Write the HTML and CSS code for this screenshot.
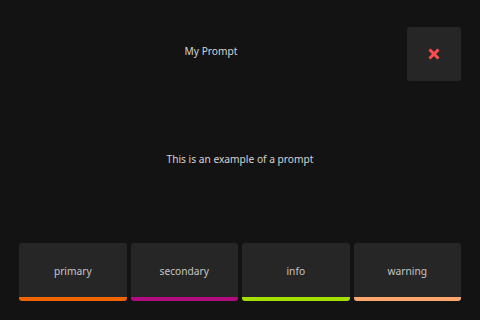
FILE: index.html
```html
<!doctype html>
<html>
 <head>
  <title>My Prompt</title>
  <meta name="viewport" content="width=device-width, initial-scale=1">
  <link rel="stylesheet" href="styles.css">
 </head>
 <body>
  <main class="prompt">
   <header class="prompt-head">
    <h1 class="prompt-title">My Prompt</h1>
    <button class="close" aria-label="Close">
     <svg width="12" height="12" viewBox="0 0 12 12">
      <path d="M1.5 1.5 L10.5 10.5 M10.5 1.5 L1.5 10.5" stroke="#ff4d4d" stroke-width="3" stroke-linecap="butt"/>
     </svg>
    </button>
   </header>
   <p class="prompt-text">This is an example of a prompt</p>
   <div class="actions">
    <button class="action primary">primary</button>
    <button class="action secondary">secondary</button>
    <button class="action info">info</button>
    <button class="action warning">warning</button>
   </div>
  </main>
 </body>
</html>
```

FILE: styles.css
```css
html, body {
 margin: 0;
 height: 100%;
}
body {
 background-color: #131313;
 color: #d4d4d4;
 font-family: "Noto Sans", sans-serif;
 font-size: 10.2px;
}
.prompt {
 height: 100%;
 box-sizing: border-box;
 padding: 27px 19px 19px;
 display: flex;
 flex-direction: column;
}
.prompt-head {
 display: flex;
 gap: 4px;
}
.prompt-title {
 flex: 1;
 margin: 0;
 padding-top: 17px;
 text-align: center;
 font-size: inherit;
 font-weight: normal;
 line-height: 15px;
}
.close {
 width: 54px;
 height: 54px;
 border: none;
 border-radius: 3px;
 background-color: #262626;
 display: flex;
 align-items: center;
 justify-content: center;
 padding: 0;
}
.prompt-text {
 flex: 1;
 margin: 0;
 padding-bottom: 6px;
 display: flex;
 align-items: center;
 justify-content: center;
 line-height: 15px;
}
.actions {
 display: flex;
 gap: 4px;
}
.action {
 flex: 1;
 height: 58px;
 border: none;
 border-bottom: 4px solid;
 border-radius: 3px;
 background-color: #262626;
 color: #c4c4c4;
 font-family: inherit;
 font-size: inherit;
 padding: 2px 0 0;
}
.primary { border-bottom-color: #f06400; }
.secondary { border-bottom-color: #b00c80; }
.info { border-bottom-color: #a6e000; }
.warning { border-bottom-color: #ffa66e; }
```
